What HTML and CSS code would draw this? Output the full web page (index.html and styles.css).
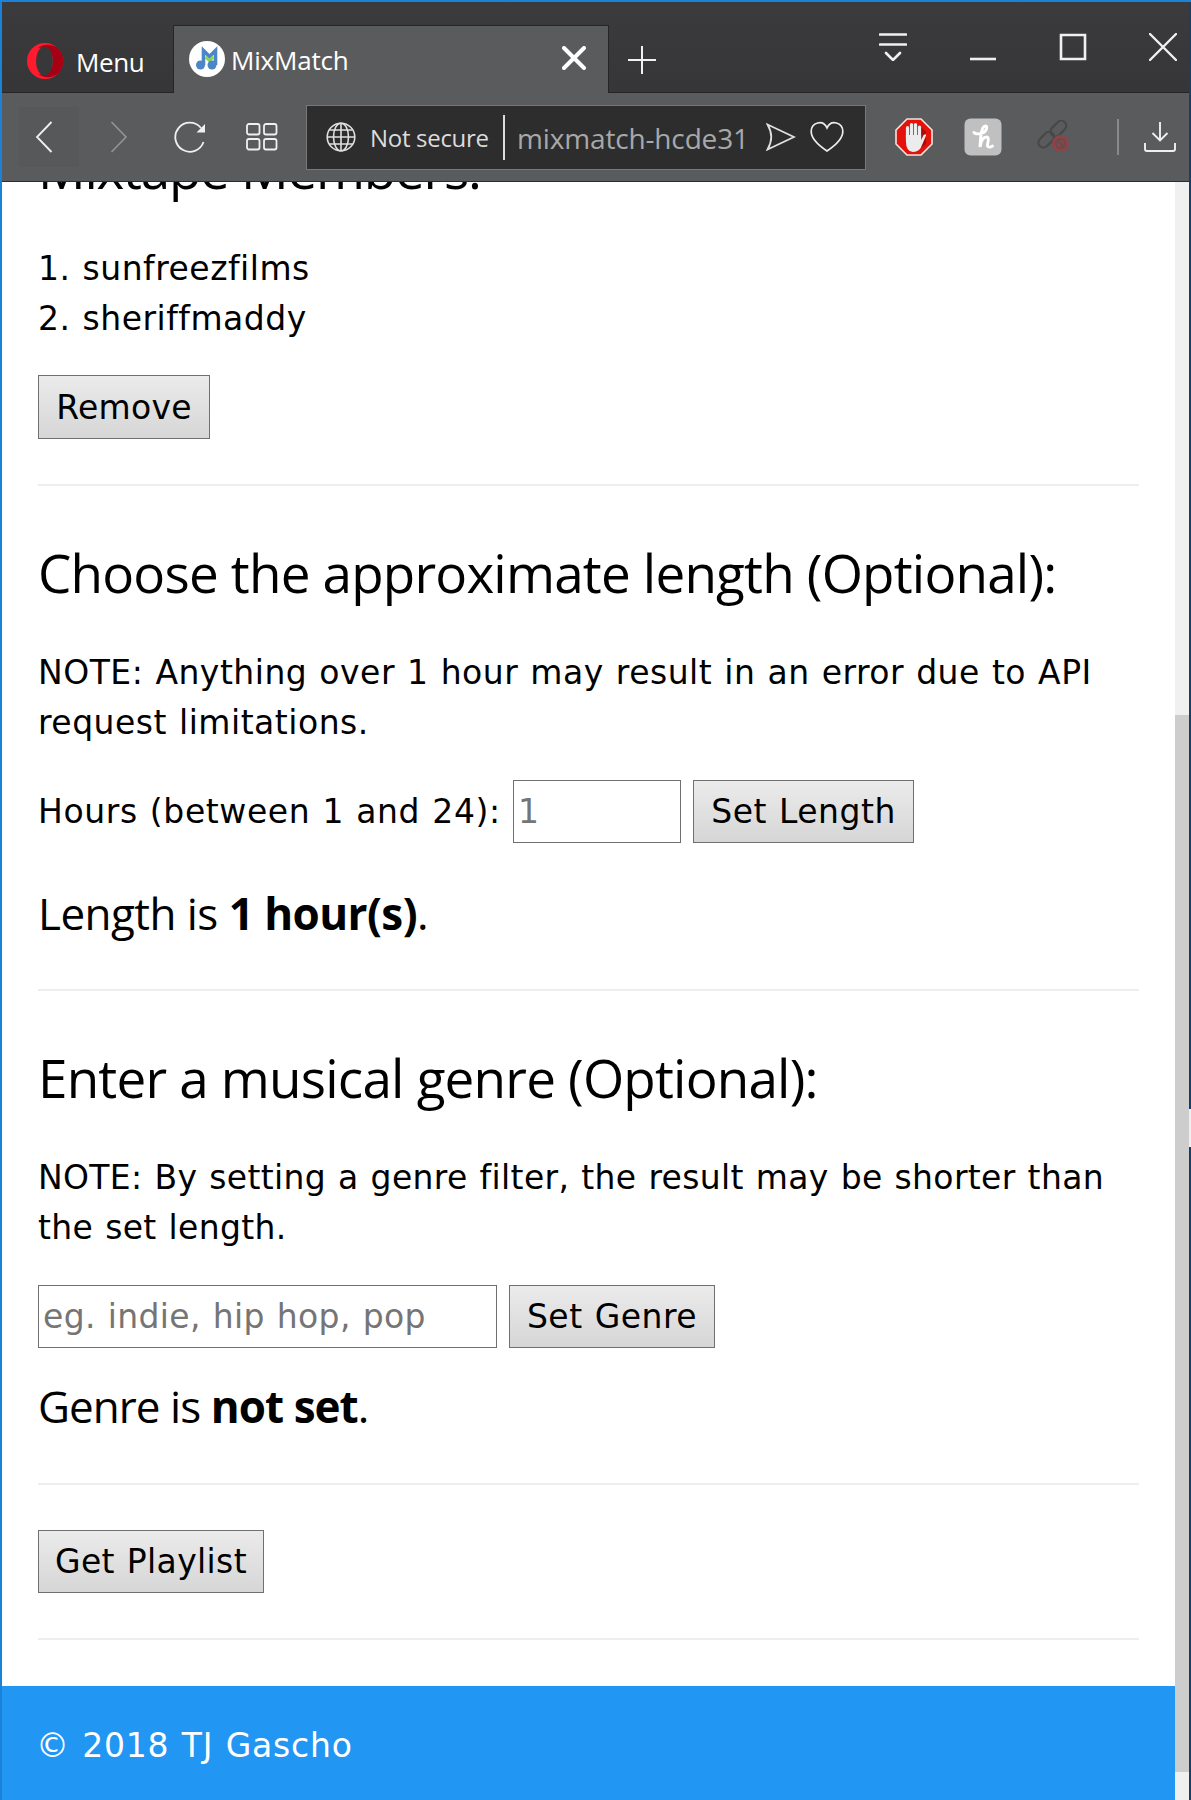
FILE: index.html
```html
<!DOCTYPE html>
<html lang="en">
<head>
<meta charset="utf-8">
<title>MixMatch</title>
<link rel="stylesheet" href="styles.css">
</head>
<body>
<div class="window">
  <header class="tabstrip">
    <div class="menu">
      <svg width="36" height="36" viewBox="0 0 36 36"><circle cx="18" cy="18" r="18" fill="#ff1b2d"/><path d="M11 5.500C17-1 36 0 36 18S17 37 11 30.500C20 34 26 27 26 18S20 2 11 5.500Z" fill="#a70014"/><ellipse cx="17.500" cy="18" rx="8.500" ry="14.500" fill="#38383a"/></svg>
      <span class="menu-label">Menu</span>
    </div>
    <div class="tab">
      <svg width="36" height="36" viewBox="0 0 36 36"><circle cx="18" cy="18" r="18" fill="#fff"/><path d="M14.500 24V9.500l6 6 6-6V24" fill="none" stroke="#4a86c8" stroke-width="3.600"/><path d="M16.500 16l4 4 4-4" fill="none" stroke="#8bd450" stroke-width="2.600"/><circle cx="11.500" cy="24" r="4.500" fill="#4a86c8"/><circle cx="23" cy="24" r="4.500" fill="#4a86c8"/></svg>
      <span class="tab-title">MixMatch</span>
      <svg class="tab-close" width="24" height="24" viewBox="0 0 24 24"><path d="M2 2l20 20M22 2L2 22" stroke="#fff" stroke-width="4" stroke-linecap="round"/></svg>
    </div>
    <svg class="new-tab" width="28" height="28" viewBox="0 0 28 28"><path d="M0 14h28M14 0v28" stroke="#f2f2f2" stroke-width="2"/></svg>
    <div class="controls">
      <svg width="28" height="28" viewBox="0 0 28 28"><path d="M1 1.500h26M1 11.500h26M7 20l7 7 7-7" fill="none" stroke="#f0f0f0" stroke-width="2.600" stroke-linecap="round"/></svg>
      <svg width="28" height="28" viewBox="0 0 28 28"><path d="M1 26h26" stroke="#f0f0f0" stroke-width="2.600"/></svg>
      <svg width="28" height="28" viewBox="0 0 28 28"><path d="M2 2h24v24H2z" fill="none" stroke="#f0f0f0" stroke-width="2.600"/></svg>
      <svg width="28" height="28" viewBox="0 0 28 28"><path d="M1 1l26 26M27 1L1 27" stroke="#f0f0f0" stroke-width="2.400" stroke-linecap="round"/></svg>
    </div>
  </header>

  <nav class="toolbar">
    <span class="back"><svg width="18" height="32" viewBox="0 0 18 32"><path d="M16.500 1L2 16l14.500 15" fill="none" stroke="#f0f0f0" stroke-width="1.800"/></svg></span>
    <svg class="forward" width="18" height="32" viewBox="0 0 18 32"><path d="M1.500 1L16 16 1.500 31" fill="none" stroke="#939495" stroke-width="1.600"/></svg>
    <svg class="reload" width="32" height="32" viewBox="0 0 32 32"><path d="M29.500 21A14.500 14.500 0 1 1 27 7" fill="none" stroke="#f0f0f0" stroke-width="1.800"/><path d="M31 3v8.500h-8.500z" fill="#f0f0f0"/></svg>
    <svg class="grid" width="32" height="28" viewBox="0 0 32 28"><g fill="none" stroke="#f0f0f0" stroke-width="1.800"><rect x="1" y="1" width="12.500" height="10.500" rx="2"/><rect x="18" y="1" width="12.500" height="10.500" rx="2"/><rect x="1" y="16" width="12.500" height="10.500" rx="2"/><rect x="18" y="16" width="12.500" height="10.500" rx="2"/></g></svg>
    <div class="address">
      <svg class="globe" width="30" height="30" viewBox="0 0 30 30"><g fill="none" stroke="#e0e0e0" stroke-width="1.600"><circle cx="15" cy="15" r="13.800"/><ellipse cx="15" cy="15" rx="7.500" ry="13.800"/><path d="M15 1v28M1 15h28M3.500 8h23M3.500 22h23"/></g></svg>
      <span class="secure">Not secure</span>
      <span class="divider"></span>
      <span class="url">mixmatch-hcde310</span>
      <svg class="send" width="30" height="28" viewBox="0 0 30 28"><path d="M1.500 1.500L28 14 1.500 26.500Q9 14 1.500 1.500z" fill="none" stroke="#e0e0e0" stroke-width="1.800"/></svg>
      <svg class="heart" width="34" height="32" viewBox="0 0 34 32"><path d="M17 30C11 26 1.200 18 1.200 10.500C1.200 1.500 13-2 17 7C21-2 32.800 1.500 32.800 10.500C32.800 18 23 26 17 30z" fill="none" stroke="#ececec" stroke-width="1.700"/></svg>
    </div>
    <svg class="blocker" width="38" height="38" viewBox="0 0 38 38"><path d="M12 1h14l11 11v14L26 37H12L1 26V12z" fill="#e3120b" stroke="#f4e4e0" stroke-width="1.600"/><path d="M21 34l10-8V14L25 8z" fill="#a80d0b"/><g stroke="#ececec" stroke-width="3.200" stroke-linecap="round" fill="none"><path d="M12.500 20V9.500M16.500 19V6.500M20.500 19V6.500M24.500 21V9"/></g><path d="M10.900 17h15.200v5l2.500-5q2.500-1.500 2.500.5L27 27q-2 7-9 7t-7.100-11z" fill="#ececec"/></svg>
    <svg class="honey" width="38" height="38" viewBox="0 0 38 38"><rect x=".5" y=".5" width="37" height="37" rx="6" fill="#c0c0c1"/><path d="M10 14.500c2 2.500 10 1.500 12-2.500s-.5-5-2.500-3c-3 3-3 13-3.500 20c1-6 3.500-10 6.500-10s1.500 5 1 7.500 2 3.500 5 1.500" fill="none" stroke="#fff" stroke-width="2.900" stroke-linecap="round"/></svg>
    <svg class="link" width="34" height="34" viewBox="0 0 34 34"><g fill="none" stroke="#47484a" stroke-width="2.200"><rect x="-7" y="-5" width="18" height="10" rx="5" transform="translate(20 10) rotate(-45)"/><rect x="-10" y="-5" width="18" height="10" rx="5" transform="translate(10 19) rotate(-45)"/></g><circle cx="23.500" cy="23.500" r="8.500" fill="#8b4547"/><g fill="none" stroke="#6a4b4d" stroke-width="2"><circle cx="23.500" cy="23.500" r="4.500"/><path d="M20.500 20.500l6 6"/></g></svg>
    <span class="tool-sep"></span>
    <svg class="download" width="32" height="32" viewBox="0 0 32 32"><path d="M16 1v18M8.500 12l7.500 7.500 7.500-7.500M1 22v6q0 2 2 2h26q2 0 2-2v-6" fill="none" stroke="#f0f0f0" stroke-width="1.900"/></svg>
  </nav>

  <div class="viewport">
    <div class="page">
      <main class="content">
        <h3 class="title title-first">Mixtape Members:</h3>
        <p class="text members">1. sunfreezfilms<br>2. sheriffmaddy</p>
        <button class="btn btn-remove">Remove</button>
        <hr class="rule">
        <h3 class="title">Choose the approximate length (Optional):</h3>
        <p class="text">NOTE: Anything over 1 hour may result in an error due to API<br>request limitations.</p>
        <div class="row">
          <label class="text label" for="hours">Hours (between 1 and 24):</label>
          <input class="field hours" id="hours" type="text" placeholder="1">
          <button class="btn btn-length">Set Length</button>
        </div>
        <h4 class="status status-length">Length is <b>1 hour(s)</b>.</h4>
        <hr class="rule rule-length">
        <h3 class="title">Enter a musical genre (Optional):</h3>
        <p class="text text-genre">NOTE: By setting a genre filter, the result may be shorter than<br>the set length.</p>
        <div class="row">
          <input class="field genre" type="text" placeholder="eg. indie, hip hop, pop">
          <button class="btn btn-genre">Set Genre</button>
        </div>
        <h4 class="status status-genre">Genre is <b>not set</b>.</h4>
        <hr class="rule rule-genre">
        <button class="btn btn-playlist">Get Playlist</button>
        <hr class="rule">
      </main>
      <footer class="footer">© 2018 TJ Gascho</footer>
    </div>
    <div class="scrollbar"><div class="thumb"></div></div>
  </div>
  <div class="edge"><i class="edge-gap"></i></div>
</div>
</body>
</html>
```
FILE: styles.css
```css
* { box-sizing: border-box; }
body { margin: 0; background: #fff; }
svg { display: block; flex: none; }

.window {
  position: relative;
  display: flex;
  flex-direction: column;
  width: 1191px;
  height: 1800px;
  overflow: hidden;
  border-top: 2px solid #1a82d8;
  border-left: 2px solid #1a82d8;
  font-family: "Open Sans", "Noto Sans", sans-serif;
}
.edge {
  position: absolute;
  top: -2px;
  right: 0;
  width: 2px;
  height: 1800px;
  background: #134068;
}
.edge-gap {
  position: absolute;
  top: 1109px;
  left: 0;
  width: 2px;
  height: 38px;
  background: #f0f0f0;
}

/* Tab strip */
.tabstrip {
  display: flex;
  height: 91px;
  flex: none;
  background: linear-gradient(#3b3b3d, #363638);
  box-shadow: inset 0 -1px #252526;
  color: #fff;
  font-size: 26px;
}
.menu {
  display: flex;
  align-items: center;
  width: 171px;
  padding: 26px 0 0 25px;
  height: 92px;
}
.menu-label { margin-left: 13px; padding-top: 2px; line-height: 36px; letter-spacing: -.4px; }
.tab {
  display: flex;
  width: 436px;
  height: 68px;
  margin-top: 23px;
  padding: 15px 0 0 15px;
  background: #5a5b5d;
  border: 1px solid #252526;
  border-bottom: 0;
}
.tab-title { margin-left: 6px; padding-top: 1px; line-height: 36px; letter-spacing: -.2px; }
.tab-close { margin: 5px 22px 0 auto; }
.new-tab { margin: 44px 0 0 19px; }
.controls { display: flex; gap: 62px; margin: 31px 14px 0 auto; }

/* Toolbar */
.toolbar {
  display: flex;
  align-items: center;
  height: 89px;
  flex: none;
  background: #5a5b5d;
  border-bottom: 1px solid #2c2c2d;
}
.back {
  display: flex;
  align-items: center;
  width: 60px;
  height: 60px;
  margin-left: 17px;
  padding-left: 16px;
  background: #575859;
}
.forward { margin-left: 31px; }
.reload { margin-left: 46px; }
.grid { margin-left: 40px; }
.address {
  display: flex;
  align-items: center;
  width: 560px;
  height: 65px;
  margin-left: 28px;
  background: #2d2d2e;
  border: 1px solid #77787a;
}
.globe { margin-left: 19px; }
.secure { width: 120px; margin-left: 14px; font-size: 24px; letter-spacing: -.3px; color: #dcdcdc; white-space: nowrap; }
.divider { width: 2px; height: 45px; margin-left: 13px; background: #dcdcdc; }
.url { width: 233px; margin-left: 12px; padding-top: 2px; overflow: hidden; font-size: 28px; letter-spacing: -.15px; color: #a8a8a9; white-space: nowrap; }
.send { margin-left: 16px; }
.heart { margin-left: 14px; }
.blocker { margin-left: 29px; }
.honey { margin-left: 31px; }
.link { margin-left: 35px; }
.tool-sep { width: 2px; height: 36px; margin-left: 46px; background: #88898a; }
.download { margin-left: 25px; }

/* Page */
.viewport { display: flex; flex: 1; min-height: 0; }
.page {
  display: flex;
  flex-direction: column;
  width: 1173px;
  overflow: hidden;
  color: #000;
}
.content { flex: none; height: 1504px; padding: 0 36px; }
.title { margin: 47px 0 35px; font-size: 53px; font-weight: 400; line-height: 80px; letter-spacing: -.8px; white-space: nowrap; }
.title-first { margin-top: -53px; letter-spacing: -1.25px; }
.text, .btn, .field, .footer {
  font-family: "DejaVu Sans", sans-serif;
  font-size: 33px;
  letter-spacing: .5px;
  word-spacing: 1.1px;
}
.text { margin: 0; line-height: 50px; white-space: nowrap; }
.text-genre { letter-spacing: .35px; }
.row { display: flex; margin-top: 32px; }
.label { width: 475px; line-height: 64px; letter-spacing: .6px; }
.btn {
  display: block;
  height: 63px;
  padding: 0;
  border: 1px solid #707070;
  border-radius: 0;
  background: linear-gradient(#ebebeb, #d6d6d6);
  color: #000;
  white-space: nowrap;
}
.field {
  height: 63px;
  padding: 0 4px;
  border: 1px solid #707070;
  background: #fff;
  letter-spacing: .35px;
}
.field::placeholder { color: #757575; opacity: 1; }
.hours { width: 168px; }
.genre { width: 459px; }
.btn-remove { width: 172px; height: 64px; margin-top: 31px; letter-spacing: .3px; }
.btn-length { width: 221px; margin-left: 12px; }
.btn-genre { width: 206px; margin-left: 12px; }
.btn-playlist { width: 226px; letter-spacing: .35px; }
.rule { height: 2px; margin: 45px 0; border: 0; background: #eee; }
.rule-length { margin-top: 43px; }
.status { margin: 25px 0 0; font-size: 44px; font-weight: 400; line-height: 66px; letter-spacing: -.55px; }
.status-length { margin-top: 36px; }
.status-length + .rule { margin-top: 43px; }
.status-genre { letter-spacing: -.95px; }
.rule-genre { margin-top: 44px; }
.footer { flex: 1; padding-left: 34px; background: #2196f3; color: #fff; line-height: 119px; letter-spacing: .8px; }
.scrollbar { width: 14px; background: #f0f0f0; }
.thumb { height: 1057px; margin-top: 533px; background: #cdcdcd; }
```
